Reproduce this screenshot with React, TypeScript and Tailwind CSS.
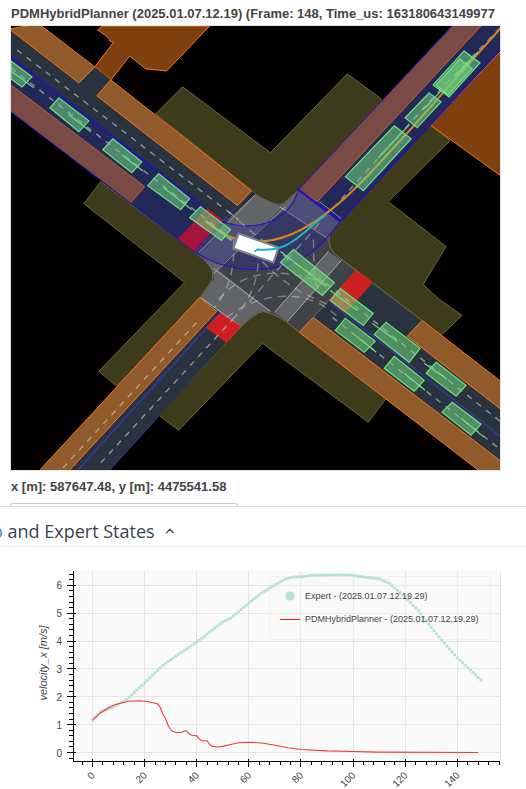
import React from "react";
import { ChevronUp } from "lucide-react";

const vehicles: { body: string; heading: string }[] = [
  { body: "10,61 31,77 21,87 10,79", heading: "10,71 33,88" },
  { body: "58,98 88,121 78,132 49,108", heading: "68,115 90,132" },
  { body: "112,139 141,162 131,173 102,150", heading: "121,155 142,171" },
  { body: "158,174 189,199 180,210 147,186", heading: "163,188 191,210" },
  { body: "200,207 230,230 221,241 189,218", heading: "205,221 231,241" },
  { body: "293,250 334,283 322,296 280,263", heading: "280,252 326,287" },
  { body: "340,289 373,314 363,326 330,301", heading: "330,291 357,311" },
  { body: "345,319 375,342 364,353 335,331", heading: "355,336 376,353" },
  { body: "386,323 420,349 409,363 374,335", heading: "372,324 397,342" },
  { body: "436,363 466,386 456,397 426,374", heading: "424,364 447,380" },
  { body: "394,357 424,381 414,392 384,369", heading: "404,374 425,391" },
  { body: "452,403 481,425 471,436 442,413", heading: "461,419 484,438" },
  { body: "394,126 411,139 363,191 345,177", heading: "378,158 409,125" },
  { body: "429,93 441,102 417,128 405,118", heading: "423,110 441,91" },
  { body: "464,51 480,63 449,97 433,85", heading: "456,76 478,52" },
  { body: "460,59 472,69 448,95 436,85", heading: "454,77 470,60" },
];

const laneDashes = [
  "M16,50 L238,220",
  "M10,68 L232,240",
  "M326,284 L500,422",
  "M332,318 L500,450",
  "M234,318 L96,468",
  "M196,323 L60,471",
  "M500,28 L440,90 L335,206",
];

const connectorDashes = [
  "M228,212 C246,228 262,244 326,284",
  "M233,240 C234,262 232,286 214,308",
  "M258,250 C259,280 250,300 234,318",
  "M218,300 C236,278 262,272 284,274 C302,276 316,280 328,286",
  "M226,318 C250,300 276,294 300,298 C316,301 326,308 336,316",
  "M313,240 C314,262 312,276 318,290",
  "M262,262 C280,282 304,296 330,306",
  "M327,212 C310,238 282,262 246,306",
];

function MapView() {
  return (
    <svg
      viewBox="10 26 490 445"
      className="block h-auto w-full bg-black"
      role="img"
      aria-label="Scenario map"
    >
      {/* walkways */}
      <g fill="#3e3a1c" stroke="#6d6834" strokeWidth="1">
        <path d="M155,114 L182,87 L270,153 L347,74 L381,99 L381,103 L298,190 Q288,205 279,205 Q268,205 251,191 Z" />
        <path d="M100,182 L83,204 L184,283 L98,372 L116,387 L200,298 L212,280 V266 L193,252 Z" />
        <path d="M430,125 L450,141 L388,202 L446,247 L423,285 L438,299 L462,316 L440,337 L340,259 Q326,250 329,235 L340,222 Z" />
        <path d="M240,328 L158,416 L178,431 L262,344 L368,423 L386,399 L299,333 Q278,314 263,312 Q256,312 240,328 Z" />
      </g>

      {/* buildings */}
      <g fill="#7f4010" stroke="#f07820" strokeWidth="1">
        <path d="M101,26 L97,30 L108,38 L109,41 L113,42 L94,67 L110,80 L129,56 L145,69 L166,71 L209,26 Z" />
        <path d="M502,50 L430,125 L502,177 Z" />
      </g>

      {/* north-west road */}
      <path d="M10,31 L78,83 L94,67 L110,80 L96,96 L255,195 L222,222 L10,57 Z" fill="#28333f" />
      <path d="M96,96 L237,206 L251,191 L256,195 L225,224 L60,80 Z" fill="#28333f" />
      <path d="M10,57 L222,222 L193,252 L10,112 Z" fill="#222858" />
      <path d="M10,85 L144,187 L130,203 L10,112 Z" fill="#7a4a44" />
      <path d="M10,85 L144,187 L130,203" fill="none" stroke="#c06030" />

      {/* north-east road */}
      <path d="M452,26 H500 V50 L340,222 L298,190 Z" fill="#222858" />
      <path d="M452,26 H481 L317,202 L298,190 Z" fill="#7a4a44" />
      <path d="M481,26 L317,202 L298,190" fill="none" stroke="#c06030" />

      {/* south-east road */}
      <path d="M340,259 L500,382 V471 H478 L299,333 Z" fill="#28333f" />
      {/* south-west road */}
      <path d="M200,298 L240,327 L109,471 H39 Z" fill="#28333f" />

      {/* junction */}
      <path
        d="M255,195 Q270,205 281,205 Q290,203 298,190 L340,222 L329,235 Q326,250 340,259 L356,271 L299,333 Q278,314 263,312 Q256,312 240,328 L200,298 L212,280 V266 L193,252 Z"
        fill="#3f4249"
        stroke="#6d6b4c"
      />
      {/* crosswalks */}
      <g fill="#626468">
        <path d="M255,195 L282,208 L213,273 L198,253 Z" />
        <path d="M298,190 L340,222 L327,239 L279,207 Z" />
        <path d="M328,252 L341,261 L287,322 L274,313 Z" />
        <path d="M200,298 L240,327 Q256,312 263,312 L270,312 L213,267 V280 Z" />
      </g>
      <g fill="none" stroke="#a9abb0" strokeWidth="1">
        <path d="M255,195 L198,253 M285,207 L213,274" />
        <path d="M279,207 L327,239" />
        <path d="M328,252 L274,313 M341,261 L287,322" />
        <path d="M200,298 L240,327 M213,269 L270,312" />
      </g>

      {/* route through the junction */}
      <path
        d="M222,222 C246,231 287,228 298,190 L340,222 L327,238 C305,262 285,269 253,270 C228,270 210,262 193,252 Z"
        fill="#2424a0"
        fillOpacity="0.32"
        stroke="#2410c0"
        strokeWidth="1.2"
      />
      <path d="M298,190 L340,222" stroke="#2410c0" strokeWidth="2" />
      <path d="M319,202 L341,219" stroke="#8d8fc0" strokeWidth="1" />

      {/* car parks and drives */}
      <g fill="#915a2a" stroke="#f07820" strokeWidth="1">
        <path d="M8,29 L78,83 L94,67 L38,24 Z" />
        <path d="M96,96 L110,80 L251,191 L237,206 Z" />
        <path d="M422,321 L407,337 L502,411 V383 Z" />
        <path d="M313,318 L299,333 L482,474 H502 V463 Z" />
        <path d="M199,298 L216,312 L67,473 H37 Z" />
      </g>

      {/* lane borders */}
      <g fill="none" stroke="#2410c0" strokeWidth="1">
        <path d="M10,57 L222,222" strokeWidth="1.5" />
        <path d="M10,112 L193,252 L222,222" />
        <path d="M452,26 L298,190" />
        <path d="M500,50 L340,222" strokeWidth="1.5" />
      </g>
      <g fill="none" stroke="#343a9c" strokeWidth="1.5">
        <path d="M330,303 L500,437" />
        <path d="M220,313 L77,471" />
        <path d="M158,417 L109,471" strokeWidth="1" />
        <path d="M236,207 L222,222" />
      </g>
      <path d="M340,259 L422,321" fill="none" stroke="#6d6b4c" />

      {/* stop areas */}
      <path d="M207,209 L222,221 L194,252 L178,239 Z" fill="#a5143a" stroke="#c01038" />
      <path d="M222,222 L193,252" stroke="#2410c0" />
      <g fill="#cc2020" stroke="#ff1818" strokeWidth="1">
        <path d="M356,271 L372,283 L345,313 L329,301 Z" />
        <path d="M220,314 L240,327 L226,343 L206,328 Z" />
      </g>

      {/* lane centre lines */}
      <g fill="none" stroke="#d0d4d8" strokeOpacity="0.6" strokeWidth="1.4" strokeDasharray="6 6">
        {laneDashes.map((d) => (
          <path key={d} d={d} />
        ))}
      </g>
      <g fill="none" stroke="#d0d4d8" strokeOpacity="0.45" strokeWidth="1.4" strokeDasharray="8 6">
        {connectorDashes.map((d) => (
          <path key={d} d={d} />
        ))}
      </g>

      {/* driven trajectory */}
      <path
        d="M205,222 C220,234 233,241 253,242 C281,243 308,228 327,213 C344,200 362,182 373,170 L410,130 L458,76 L500,29"
        fill="none"
        stroke="#d98222"
        strokeWidth="2"
      />

      {/* ego vehicle */}
      <path d="M238,234 L278,248 L273,263 L233,249 Z" fill="#fff" stroke="#85838a" strokeWidth="2" />

      {/* tracked vehicles */}
      {vehicles.map((v) => (
        <g key={v.body} stroke="#70e080">
          <polygon points={v.body} fill="#72d87c" fillOpacity="0.55" strokeWidth="1.2" />
          <polyline points={v.heading} fill="none" strokeWidth="1.2" />
        </g>
      ))}

      {/* planned trajectory */}
      <path
        d="M254,252 L257,250 C283,252 292,242 304,233 L325,215"
        fill="none"
        stroke="#18b8c4"
        strokeWidth="2"
      />
    </svg>
  );
}

type Point = [number, number];

const expertKnots: Point[] = [
  [0, 1.17], [3, 1.46], [8, 1.64], [11, 1.79], [13, 1.9], [20, 2.5], [27, 3.13], [31, 3.4],
  [36, 3.71], [41, 4.03], [46, 4.4], [50, 4.69], [53, 4.82], [60, 5.37], [65, 5.73], [68, 5.91],
  [74, 6.23], [77, 6.3], [82, 6.33], [83, 6.36], [97, 6.38], [100, 6.36], [104, 6.3], [110, 6.24],
  [114, 6.07], [120, 5.58], [125, 5.1], [129, 4.6], [134, 4.04], [140, 3.4], [149, 2.61],
];

const planner: Point[] = [
  [0, 1.16], [3, 1.42], [6, 1.6], [8, 1.7], [11, 1.78], [14, 1.84], [18, 1.86], [21, 1.83],
  [24, 1.77], [25, 1.74], [26, 1.62], [27, 1.38], [28, 1.22], [29, 0.98], [30, 0.82], [31, 0.75],
  [32, 0.72], [34, 0.72], [35, 0.76], [36, 0.78], [37, 0.68], [38, 0.62], [40, 0.6], [41, 0.48],
  [42, 0.42], [44, 0.42], [45, 0.28], [46, 0.22], [48, 0.2], [50, 0.22], [53, 0.29], [56, 0.35],
  [60, 0.37], [65, 0.34], [70, 0.26], [75, 0.17], [80, 0.11], [90, 0.06], [100, 0.035],
  [110, 0.015], [148, 0],
];

const sx = (v: number) => 92.5 + v * 2.606;
const sy = (v: number) => 205.5 - v * 27.85;

function interpolate(knots: Point[], x: number): number {
  const i = Math.max(1, knots.findIndex(([kx]) => kx >= x));
  const [x0, y0] = knots[i - 1];
  const [x1, y1] = knots[i];
  return y0 + ((x - x0) / (x1 - x0)) * (y1 - y0);
}

const expert = Array.from({ length: 150 }, (_, x) => ({ x, y: interpolate(expertKnots, x) }));
const xTicks = [0, 20, 40, 60, 80, 100, 120, 140];
const yTicks = [0, 1, 2, 3, 4, 5, 6];
const xMinor = Array.from({ length: 41 }, (_, i) => (i - 1) * 4).filter((v) => v <= 156);
const yMinor = Array.from({ length: 34 }, (_, i) => (i - 1) * 0.2);

function VelocityChart() {
  return (
    <svg
      viewBox="0 0 526 242"
      className="block h-auto w-full font-['Liberation_Sans',Arial,sans-serif]"
      role="img"
      aria-label="Velocity chart"
    >
      <rect x="73" y="24" width="428" height="190" fill="#fafafa" />
      <g stroke="#e5e5e5" shapeRendering="crispEdges">
        {xTicks.map((v) => (
          <line key={v} x1={sx(v)} x2={sx(v)} y1="24" y2="214" />
        ))}
        {yTicks.map((v) => (
          <line key={v} x1="73" x2="500" y1={sy(v)} y2={sy(v)} />
        ))}
        <line x1="500.5" x2="500.5" y1="24" y2="214" />
      </g>
      <rect x="270" y="29.5" width="220.5" height="63" fill="#fafafa" fillOpacity="0.3" stroke="#f0f0f0" />

      <g fill="#b3e2cd">
        {expert.map((p) => (
          <circle key={p.x} cx={sx(p.x)} cy={sy(p.y)} r="1.6" />
        ))}
      </g>
      <polyline
        points={planner.map(([x, y]) => `${sx(x)},${sy(y)}`).join(" ")}
        fill="none"
        stroke="#f03a3a"
        strokeWidth="1.1"
      />

      <g stroke="#000" shapeRendering="crispEdges">
        <line x1="73.5" x2="73.5" y1="24" y2="215" />
        <line x1="73" x2="500" y1="214.5" y2="214.5" />
        {xTicks.map((v) => (
          <line key={v} x1={sx(v)} x2={sx(v)} y1="212" y2="220" />
        ))}
        {xMinor.map((v) => (
          <line key={v} x1={sx(v)} x2={sx(v)} y1="214" y2="218" />
        ))}
        {yTicks.map((v) => (
          <line key={v} x1="67" x2="76" y1={sy(v)} y2={sy(v)} />
        ))}
        {yMinor.map((v) => (
          <line key={v} x1="69" x2="73" y1={sy(v)} y2={sy(v)} />
        ))}
      </g>

      <g fill="#444" fontSize="10">
        {yTicks.map((v) => (
          <text key={v} x="62" y={sy(v) + 4} textAnchor="end">
            {v}
          </text>
        ))}
        {xTicks.map((v) => (
          <text
            key={v}
            textAnchor="end"
            transform={`translate(${sx(v) + 3} 229) rotate(-45)`}
          >
            {v}
          </text>
        ))}
        <text transform="translate(47 116) rotate(-90)" textAnchor="middle" fontStyle="italic" fontSize="11">
          velocity_x [m/s]
        </text>
      </g>

      <circle cx="290" cy="49" r="4.5" fill="#b3e2cd" />
      <line x1="280" x2="300" y1="72.5" y2="72.5" stroke="#e41a1c" shapeRendering="crispEdges" />
      <g fill="#444" fontSize="9">
        <text x="305" y="52">Expert - (2025.01.07.12.19.29)</text>
        <text x="305" y="75">PDMHybridPlanner - (2025.01.07.12.19.29)</text>
      </g>
    </svg>
  );
}

export default function App() {
  return (
    <main className="overflow-hidden bg-white font-['Liberation_Sans',Arial,sans-serif]">
      <section className="pr-[25px] pl-[10px]">
        <h1 className="overflow-hidden pt-1 pb-[1px] pl-px text-[13px] leading-5 font-bold whitespace-nowrap text-[#444]">
          PDMHybridPlanner (2025.01.07.12.19) (Frame: 148, Time_us: 163180643149977
        </h1>
        <div className="border border-[#e5e5e5]">
          <MapView />
        </div>
        <p className="pt-1.5 pb-1.5 pl-px text-[13px] leading-5 font-bold text-[#444]">
          x [m]: 587647.48, y [m]: 4475541.58
        </p>
        <div className="h-[3px] w-[228px] rounded-t border-x border-t border-[#ccc]" />
      </section>

      <section className="border-t border-[#ddd]">
        <header className="flex h-10 items-center border-b border-[#eee] pt-2">
          <h2 className="-ml-[8px] font-['Open_Sans','Noto_Sans',sans-serif] text-[18px] leading-7 whitespace-nowrap text-[#3a4254]">
            <span className="text-[#3b86c8]">o</span> and Expert States
          </h2>
          <button type="button" aria-label="Collapse section" className="ml-2 text-[#3a4254]">
            <ChevronUp size={14} />
          </button>
        </header>
        <VelocityChart />
      </section>
    </main>
  );
}
